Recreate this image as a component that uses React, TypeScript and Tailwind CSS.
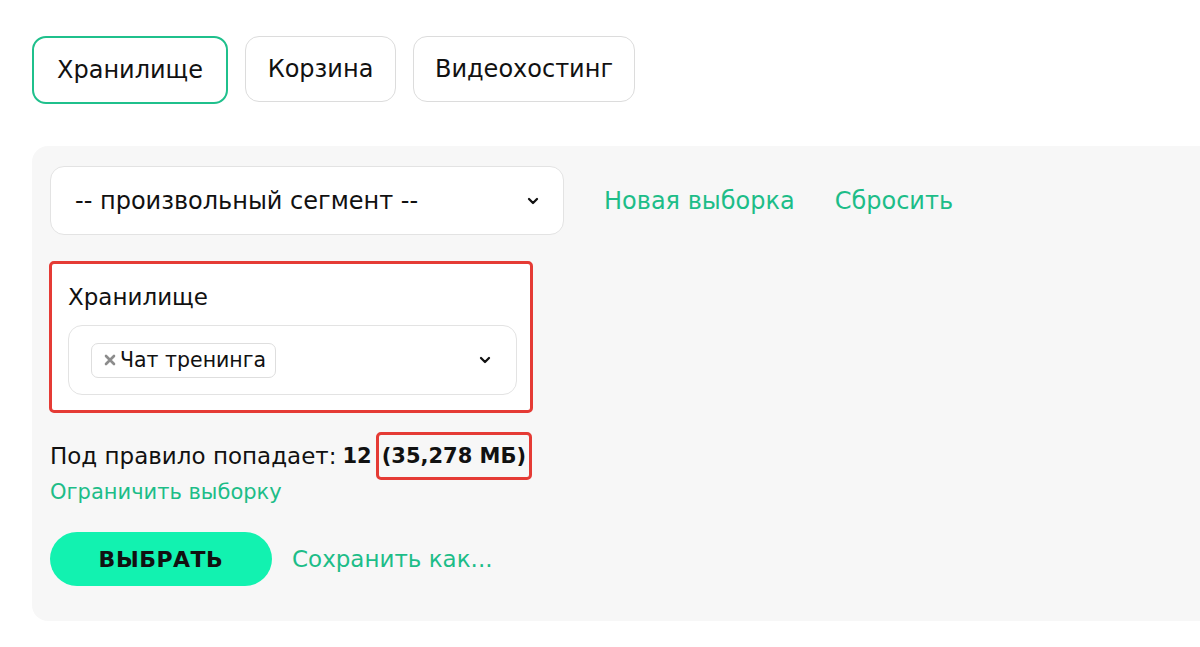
import React from "react";

const font = { fontFamily: "'DejaVu Sans', 'Noto Sans', sans-serif" };

function Chevron() {
  return (
    <svg width="16" height="16" viewBox="0 0 24 24" fill="none" stroke="#111" strokeWidth="3.4" strokeLinecap="round" strokeLinejoin="round">
      <path d="M6 9l6 6 6-6" />
    </svg>
  );
}

function RemoveMark() {
  return (
    <svg width="12" height="12" viewBox="0 0 12 12" fill="none" stroke="#8c8c8c" strokeWidth="2.6" strokeLinecap="round">
      <path d="M2 2l8 8M10 2l-8 8" />
    </svg>
  );
}

function Tab({ label, width, active }: { label: string; width: string; active?: boolean }) {
  return (
    <button
      className={
        (active
          ? "h-[68px] rounded-[14px] border-2 border-[#1fc08c] "
          : "h-[66px] rounded-[14px] border border-[#dcdcdc] ") +
        width +
        " bg-white text-[24px] text-[#111] flex items-center justify-center"
      }
    >
      {label}
    </button>
  );
}

export default function App() {
  return (
    <div className="min-h-[647px] bg-white overflow-hidden pl-[32px] pt-[36px]" style={font}>
      <div className="flex items-start gap-[17px]">
        <Tab label="Хранилище" width="w-[196px]" active />
        <Tab label="Корзина" width="w-[151px]" />
        <Tab label="Видеохостинг" width="w-[222px]" />
      </div>

      <div className="mt-[42px] mr-[-40px] rounded-[16px] bg-[#f7f7f7] pl-[18px] pt-[20px] pb-[35px]">
        {/* segment picker */}
        <div className="flex items-center">
          <div className="w-[514px] h-[69px] rounded-[14px] border border-[#e3e3e3] bg-white flex items-center justify-between pl-[24px] pr-[22px]">
            <span className="text-[24px] text-[#111]">-- произвольный сегмент --</span>
            <Chevron />
          </div>
          <a className="ml-[40px] text-[24px] text-[#1dbd88]">Новая выборка</a>
          <a className="ml-[40px] text-[24px] text-[#1dbd88]">Сбросить</a>
        </div>

        {/* storage filter */}
        <div className="mt-[26px] ml-[-1px] w-[484px] rounded-[5px] border-[3px] border-[#e53b35] bg-white pl-[16px] pr-[13px] pt-[17px] pb-[15px]">
          <div className="text-[23px] leading-[32px] text-[#111]">Хранилище</div>
          <div className="mt-[12px] h-[70px] rounded-[14px] border border-[#e3e3e3] bg-white flex items-center justify-between pl-[22px] pr-[23px]">
            <span className="h-[35px] flex items-center gap-[4px] rounded-[7px] border border-[#dedede] pl-[12px] pr-[9px] text-[20.5px] text-[#111]">
              <RemoveMark />
              Чат тренинга
            </span>
            <Chevron />
          </div>
        </div>

        <div className="mt-[19px] flex items-center text-[23px] leading-[48px] text-[#111]">
          <span>Под правило попадает:</span>
          <b className="ml-[6px] text-[21px]">12</b>
          <span className="ml-[4px] rounded-[5px] border-[3px] border-[#e53b35] px-[3px] text-[21px] leading-[42px] font-bold">
            (35,278 МБ)
          </span>
        </div>
        <a className="block text-[21px] leading-[24px] text-[#1dbd88]">Ограничить выборку</a>

        <div className="mt-[28px] flex items-center gap-[20px]">
          <button className="w-[222px] h-[54px] rounded-full bg-[#12f2b0] text-[22px] font-extrabold tracking-[0.5px] text-[#111]">
            ВЫБРАТЬ
          </button>
          <a className="text-[23px] text-[#1dbd88]">Сохранить как...</a>
        </div>
      </div>
    </div>
  );
}
